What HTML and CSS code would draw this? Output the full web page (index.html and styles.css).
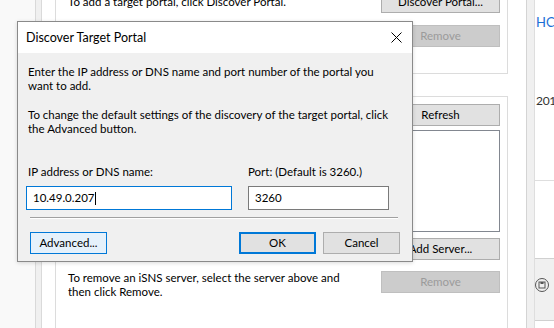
FILE: index.html
```html
<!DOCTYPE html>
<html>
<head>
  <title>Discover Target Portal</title>
  <meta charset="UTF-8">
  <meta name="viewport" content="width=device-width,initial-scale=1">
  <link rel="stylesheet" href="styles.css">
</head>

<body>
  <!-- the iSCSI Initiator window behind the dialog -->
  <div class="desktop">
    <div class="rail"></div>
    <div class="rail-band"></div>

    <div class="page">
      <section class="group group-portals">
        <div class="action action-single">
          <p class="action-text">To add a target portal, click Discover Portal.</p>
          <button class="btn wide">Discover Portal...</button>
        </div>
        <div class="action">
          <p class="action-text"></p>
          <button class="btn wide" disabled>Remove</button>
        </div>
      </section>

      <section class="group group-isns">
        <div class="action action-single">
          <p class="action-text"></p>
          <button class="btn wide">Refresh</button>
        </div>
        <div class="listbox"></div>
        <div class="action action-single add-row">
          <p class="action-text"></p>
          <button class="btn wide">Add Server...</button>
        </div>
        <div class="action remove-row">
          <p class="action-text">To remove an iSNS server, select the server above and then click Remove.</p>
          <button class="btn wide" disabled>Remove</button>
        </div>
      </section>
    </div>

    <div class="splitter"></div>

    <div class="side">
      <div class="side-top">
        <span class="side-link">HCI</span>
        <span class="side-date">2019</span>
      </div>
      <div class="side-mid"></div>
      <div class="side-bar">
        <svg width="16" height="16" viewBox="0 0 16 16">
          <circle cx="8" cy="8" r="6.5" fill="none" stroke="#555" stroke-width="1"/>
          <rect x="5" y="5" width="6" height="6" fill="none" stroke="#555" stroke-width="1"/>
          <rect x="6.5" y="5" width="3" height="2" fill="#555"/>
        </svg>
      </div>
    </div>
  </div>

  <div class="dialog">
    <div class="dialog-title">
      <span>Discover Target Portal</span>
      <svg class="close" width="11" height="11" viewBox="0 0 11 11">
        <path d="M0.5 0.5 L10.5 10.5 M10.5 0.5 L0.5 10.5" stroke="#000" stroke-width="1"/>
      </svg>
    </div>

    <div class="dialog-body">
      <p class="hint">Enter the IP address or DNS name and port number of the portal you want to add.</p>
      <p class="hint hint-second">To change the default settings of the discovery of the target portal, click the Advanced button.</p>

      <div class="fields">
        <label class="field-label first">IP address or DNS name:</label>
        <label class="field-label">Port: (Default is 3260.)</label>
        <div class="field focused"><span>10.49.0.207</span><span class="caret"></span></div>
        <div class="field"><span>3260</span></div>
      </div>

      <div class="separator"></div>

      <div class="dialog-actions">
        <button class="btn hover">Advanced...</button>
        <button class="btn default ok">OK</button>
        <button class="btn">Cancel</button>
      </div>
    </div>
  </div>
</body>
</html>
```

FILE: styles.css
```css
*, *:before, *:after {
  box-sizing: border-box;
}

html, body {
  margin: 0;
  width: 554px;
  height: 328px;
  overflow: hidden;
}

body {
  position: relative;
  background: #fff;
  color: #000;
  font-family: Lato, "Liberation Sans", sans-serif;
  font-size: 11.5px;
  line-height: 14px;
}

p {
  margin: 0;
}

/* background window */

.desktop {
  display: flex;
  height: 328px;
  overflow: hidden;
}

.rail {
  width: 36px;
  background: #f9f9f9;
  border-right: 1px solid #d9d9d9;
}

.rail-band {
  width: 6px;
  background: #f0f0f0;
  border-right: 1px solid #dadada;
}

.page {
  width: 484px;
  padding: 0 18px 0 13px;
  margin-top: -10px;
}

.group {
  border: 1px solid #dcdcdc;
  padding: 0 7px 0 12px;
}

.group-portals {
  padding-bottom: 26px;
}

.group-isns {
  margin-top: 22px;
  padding-top: 7px;
  height: 250px;
}

.action {
  display: flex;
  justify-content: space-between;
  align-items: flex-start;
  margin-top: 12px;
}

.action:first-child {
  margin-top: 0;
}

.action-single {
  align-items: center;
}

.action-text {
  width: 292px;
}

.add-row {
  margin-top: 6px;
}

.remove-row {
  margin-top: 11px;
}

.listbox {
  margin-top: 4px;
  height: 102px;
  background: #fff;
  border: 1px solid #828790;
}

.btn {
  height: 22px;
  width: 77px;
  padding: 0;
  font: inherit;
  color: #000;
  background: #e1e1e1;
  border: 1px solid #adadad;
}

.btn.wide {
  width: 119px;
  flex-shrink: 0;
}

.btn:disabled {
  background: #cccccc;
  border-color: #bfbfbf;
  color: #9b9b9b;
}

.splitter {
  width: 9px;
  background: #f0f0f0;
  border-left: 1px solid #d4d4d4;
  border-right: 1px solid #dedede;
}

.side {
  width: 19px;
  overflow: hidden;
  display: flex;
  flex-direction: column;
}

.side-top {
  height: 181px;
  border-bottom: 1px solid #dedede;
  padding: 14px 0 0 1px;
  font-size: 13px;
  line-height: 16px;
  white-space: nowrap;
}

.side-link {
  display: block;
  color: #1a6fd6;
}

.side-date {
  display: block;
  margin-top: 63px;
  color: #333;
  font-size: 12px;
  letter-spacing: -0.3px;
}

.side-mid {
  height: 78px;
  border-bottom: 1px solid #d0d0d0;
}

.side-bar {
  height: 62px;
  flex-shrink: 0;
  background: #f0f0f0;
  border-bottom: 1px solid #d0d0d0;
  padding: 18px 0 0 0;
  margin-left: -1px;
}

/* the dialog */

.dialog {
  position: absolute;
  left: 17px;
  top: 21px;
  width: 396px;
  height: 241px;
  background: #f0f0f0;
  border: 1px solid #8a8a8a;
  box-shadow: 0 1px 4px rgba(0,0,0,.15);
  display: flex;
  flex-direction: column;
}

.dialog-title {
  height: 31px;
  flex-shrink: 0;
  background: #fff;
  display: flex;
  align-items: center;
  justify-content: space-between;
  padding: 0 10px 0 8px;
  font-size: 12.5px;
}

.close {
  display: block;
}

.dialog-body {
  padding: 12px 10px 0 10px;
}

.hint {
  width: 368px;
}

.hint-second {
  margin-top: 15px;
}

.fields {
  display: grid;
  grid-template-columns: 206px 141px;
  column-gap: 16px;
  row-gap: 7px;
  margin: 29px 0 0 -2px;
}

.field-label.first {
  padding-left: 2px;
}

.field {
  height: 24px;
  background: #fff;
  border: 1px solid #7a7a7a;
  padding-left: 6px;
  display: flex;
  align-items: center;
}

.field.focused {
  border-color: #0078d7;
}

.caret {
  width: 1px;
  height: 13px;
  background: #000;
}

.separator {
  margin: 7px 0 0 2px;
  width: 368px;
  border-top: 1px solid #a0a0a0;
  border-bottom: 1px solid #fff;
}

.dialog-actions {
  display: flex;
  gap: 7px;
  width: 370px;
  margin: 13px 0 0 2px;
}

.btn.ok {
  margin-left: auto;
}

.btn.default {
  border: 2px solid #0078d7;
}

.btn.hover {
  background: #e5f1fb;
  border-color: #0078d7;
}
```
